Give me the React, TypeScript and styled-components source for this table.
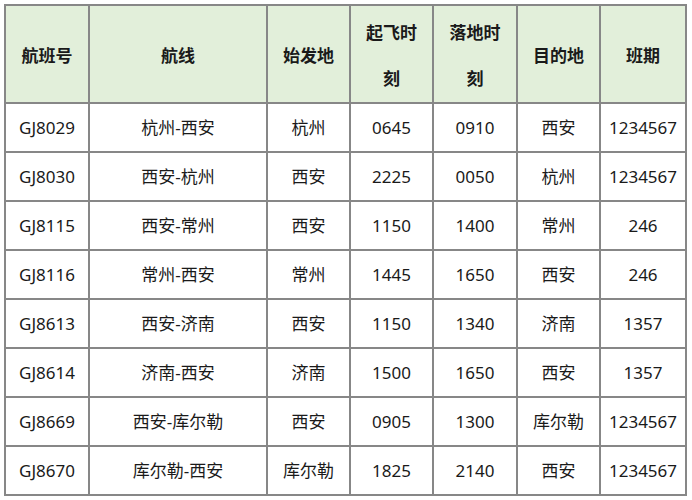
import React from 'react';
import styled, { createGlobalStyle } from 'styled-components';

const GlobalStyle = createGlobalStyle`
  body {
    margin: 0;
    background: #fff;
    font-family: "Noto Sans", "Noto Sans CJK SC", sans-serif;
  }
`;

const columns = [
  { title: '航班号', width: 84 },
  { title: '航线', width: 178 },
  { title: '始发地', width: 83 },
  { title: '起飞时刻', width: 83 },
  { title: '落地时刻', width: 84 },
  { title: '目的地', width: 83 },
  { title: '班期', width: 86 },
];

const flights = [
  ['GJ8029', '杭州-西安', '杭州', '0645', '0910', '西安', '1234567'],
  ['GJ8030', '西安-杭州', '西安', '2225', '0050', '杭州', '1234567'],
  ['GJ8115', '西安-常州', '西安', '1150', '1400', '常州', '246'],
  ['GJ8116', '常州-西安', '常州', '1445', '1650', '西安', '246'],
  ['GJ8613', '西安-济南', '西安', '1150', '1340', '济南', '1357'],
  ['GJ8614', '济南-西安', '济南', '1500', '1650', '西安', '1357'],
  ['GJ8669', '西安-库尔勒', '西安', '0905', '1300', '库尔勒', '1234567'],
  ['GJ8670', '库尔勒-西安', '库尔勒', '1825', '2140', '西安', '1234567'],
];

const Page = styled.div`
  padding: 4px 0 0 4px;
`;

const Table = styled.table`
  border-collapse: collapse;
  table-layout: fixed;
  color: #1a1a1a;
  font-size: 17px;
`;

const HeadCell = styled.th`
  background: #e2efda;
  border: 2px solid #878787;
  height: 96px;
  padding: 4px 8px 0;
  line-height: 46px;
  font-weight: 700;
  text-align: center;
  vertical-align: middle;
  word-break: break-all;
  box-sizing: border-box;
`;

const Cell = styled.td`
  border: 2px solid #878787;
  height: 47px;
  padding: 0 4px;
  line-height: 20px;
  text-align: center;
  vertical-align: middle;
  white-space: nowrap;
`;

const App = () => {
  return (
    <Page>
      <GlobalStyle />
      <Table>
        <colgroup>
          {columns.map((c) => (
            <col key={c.title} style={{ width: c.width }} />
          ))}
        </colgroup>
        <thead>
          <tr>
            {columns.map((c) => (
              <HeadCell key={c.title}>{c.title}</HeadCell>
            ))}
          </tr>
        </thead>
        <tbody>
          {flights.map((row) => (
            <tr key={row[0]}>
              {row.map((v, i) => (
                <Cell key={`${row[0]}-${i}`}>{v}</Cell>
              ))}
            </tr>
          ))}
        </tbody>
      </Table>
    </Page>
  );
};

export default App;
